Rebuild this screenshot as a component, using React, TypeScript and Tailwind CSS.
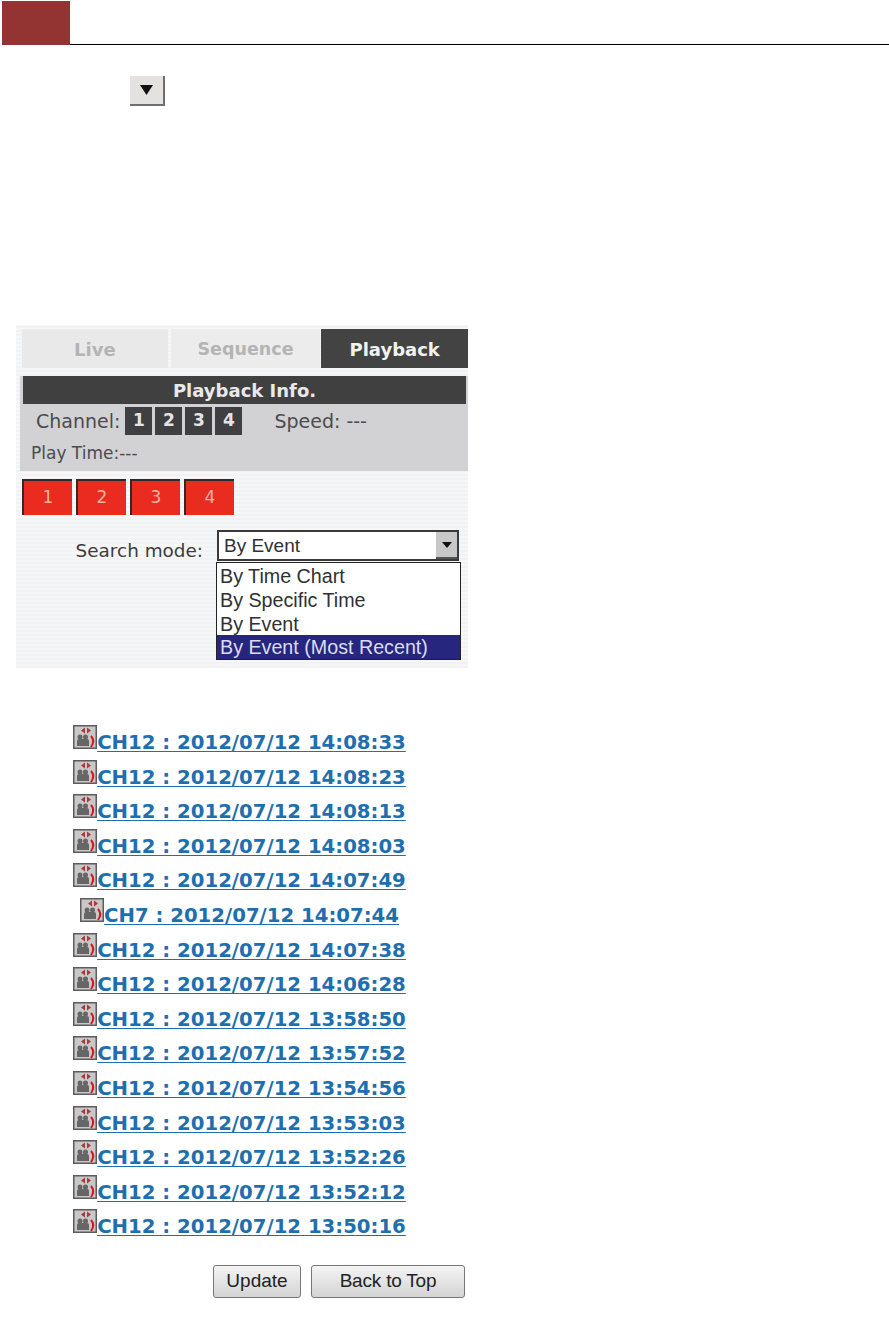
const dejavu = 'font-["DejaVu_Sans",sans-serif]'
const events = [
  'CH12 : 2012/07/12 14:08:33',
  'CH12 : 2012/07/12 14:08:23',
  'CH12 : 2012/07/12 14:08:13',
  'CH12 : 2012/07/12 14:08:03',
  'CH12 : 2012/07/12 14:07:49',
  'CH7 : 2012/07/12 14:07:44',
  'CH12 : 2012/07/12 14:07:38',
  'CH12 : 2012/07/12 14:06:28',
  'CH12 : 2012/07/12 13:58:50',
  'CH12 : 2012/07/12 13:57:52',
  'CH12 : 2012/07/12 13:54:56',
  'CH12 : 2012/07/12 13:53:03',
  'CH12 : 2012/07/12 13:52:26',
  'CH12 : 2012/07/12 13:52:12',
  'CH12 : 2012/07/12 13:50:16',
]

function EventIcon() {
  return (
    <svg width="24" height="24" viewBox="0 0 24 24" className="shrink-0 self-start">
      <rect x="0.75" y="0.75" width="22.5" height="22.5" fill="#c9c7c7" stroke="#5c5c5c" strokeWidth="1.500" />
      <path d="M8 5.500l4-3v6zM18 5.500l-4-3v6z" fill="#a83a3c" />
      <circle cx="7" cy="12" r="2.500" fill="#666" />
      <circle cx="12.500" cy="12" r="2.500" fill="#666" />
      <path d="M4 21v-5q0-2 2-2h8q2 0 2 2v5z" fill="#666" />
      <path d="M18 11q4.500 5 0 11" fill="none" stroke="#d8141c" strokeWidth="2" />
    </svg>
  )
}

function Tabs() {
  return (
    <div className={`flex h-[39px] pl-[6px] font-bold text-[18px] ${dejavu}`}>
      <div className="w-[146px] pt-px flex items-center justify-center bg-[#e9e9e9] text-[#b4b4b4]">Live</div>
      <div className="w-[150px] pt-px ml-[3px] flex items-center justify-center bg-[#ececec] text-[#b4b4b4] text-[17.5px]">Sequence</div>
      <div className="w-[147px] pt-px ml-px flex items-center justify-center bg-[#434343] text-[#f2f2ee]">Playback</div>
    </div>
  )
}

function PlaybackInfo() {
  return (
    <div className={`mt-[8px] ml-[4px] h-[95px] bg-[#d2d2d4] text-[#4b4b50] text-[17px] ${dejavu}`}>
      <div className="ml-[3px] mr-[2px] h-[28px] bg-[#404040] text-[#e9e9e9] font-bold text-[18px] flex items-center justify-center">Playback Info.</div>
      <div className="flex items-center h-[28px] mt-[3px] pl-[16px] text-[19px]">
        <span>Channel:</span>
        <div className="flex gap-[3px] ml-[5px] text-[17px]">
          {[1, 2, 3, 4].map((n) => (
            <span key={n} className="w-[27px] h-[28px] bg-[#3f3f41] text-[#e4e4e4] font-bold flex items-center justify-center">{n}</span>
          ))}
        </div>
        <span className="ml-[32px]">Speed: ---</span>
      </div>
      <div className="pl-[11px] mt-[3px] leading-[30px]">Play Time:---</div>
    </div>
  )
}

function Panel() {
  return (
    <div className="mt-[219px] ml-[16px] w-[452px] h-[343px] pt-[4px] bg-[repeating-linear-gradient(0deg,#f1f2f4_0px,#f1f2f4_2px,#f7f7f8_2px,#f7f7f8_4px)]">
      <Tabs />
      <PlaybackInfo />
      <div className={`flex gap-[4px] mt-[8px] ml-[6px] text-[17px] text-[#f7b3a0] ${dejavu}`}>
        {[1, 2, 3, 4].map((n) => (
          <div key={n} className="w-[50px] h-[36px] bg-[#ea2c20] border-t-2 border-l-2 border-[#33272a] flex items-center justify-center">{n}</div>
        ))}
      </div>
      <div className="flex mt-[15px]">
        <div className={`w-[200px] pr-[13px] pt-[7px] text-right text-[18.400px] text-[#3d3b3d] ${dejavu}`}>Search mode:</div>
        <div className="w-[245px] font-['Liberation_Sans',sans-serif] text-[19.700px] text-[#303033]">
          <div className="ml-px mr-[2px] h-[31px] bg-white border-2 border-[#3a3a3a] flex items-center justify-between pl-[5px] text-[19px]">
            <span className="pt-[2px]">By Event</span>
            <div className="w-[21px] h-full bg-[#c8c8c8] border-b-2 border-[#555] flex items-center justify-center">
              <svg width="10" height="6" viewBox="0 0 10 6"><path d="M0 0h10L5 6z" fill="#111" /></svg>
            </div>
          </div>
          <div className="mt-[1px] h-[98px] border border-[#222] bg-white pl-[3px] pt-px leading-[24px]">
            <div>By Time Chart</div>
            <div>By Specific Time</div>
            <div>By Event</div>
          </div>
          <div className="-mt-[25px] relative h-[25px] mx-px pl-[3px] bg-[#26267f] text-[#dcdcf0] leading-[25px] border-b border-[#222]">By Event (Most Recent)</div>
        </div>
      </div>
    </div>
  )
}

function EventList() {
  return (
    <div className={`mt-[57px] ml-[16px] w-[447px] flex flex-col ${dejavu}`}>
      {events.map((e, i) => (
        <div key={i} className="h-[34.6px] flex justify-center">
          <EventIcon />
          <a href="#" className="mt-[7px] h-[25px] leading-[22px] text-[19.700px] font-bold text-[#1f6fae] underline underline-offset-2">{e}</a>
        </div>
      ))}
    </div>
  )
}

export default function App() {
  return (
    <div className="relative w-[889px] h-[1323px] bg-white overflow-hidden">
      <div className="flex items-end h-[45px]">
        <div className="ml-[2px] w-[68px] h-[44px] bg-[#933433]" />
        <div className="flex-1 h-px bg-black" />
      </div>
      <div className="mt-[31px] ml-[130px] w-[35px] h-[30px] bg-[#e3e2de] border-r-2 border-b-2 border-[#6e6e6e] flex items-center justify-center">
        <svg width="13" height="10" viewBox="0 0 13 10"><path d="M0 0h13L6.500 10z" fill="#111" /></svg>
      </div>
      <Panel />
      <EventList />
      <div className="flex mt-[21px] ml-[213px] gap-[10px] font-['Liberation_Sans',sans-serif] text-[19px] text-[#222]">
        <button className="w-[88px] h-[33px] rounded-[3px] border border-[#777] bg-gradient-to-b from-[#f4f4f4] to-[#d4d4d4]">Update</button>
        <button className="w-[154px] h-[33px] rounded-[3px] border border-[#777] bg-gradient-to-b from-[#f4f4f4] to-[#d4d4d4] tracking-[-0.2px]">Back to Top</button>
      </div>
    </div>
  )
}
